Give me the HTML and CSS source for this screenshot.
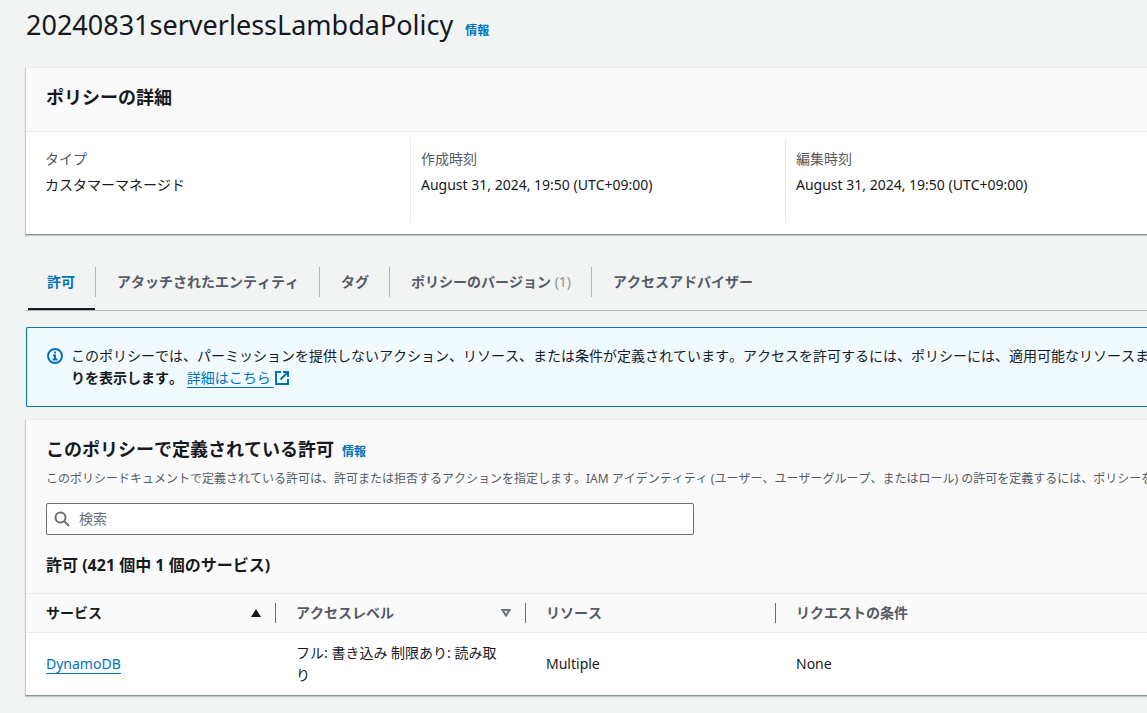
FILE: index.html
```html
<!DOCTYPE html>
<html lang="ja">
<head>
<meta charset="utf-8">
<meta name="viewport" content="width=device-width, initial-scale=1">
<title>20240831serverlessLambdaPolicy</title>
<link rel="stylesheet" href="styles.css">
</head>
<body>
<main class="page">
  <header class="page-header">
    <h1 class="page-title">20240831serverlessLambdaPolicy</h1>
    <a class="info-link" href="#">情報</a>
  </header>

  <section class="card">
    <div class="card-header"><h2 class="card-title">ポリシーの詳細</h2></div>
    <dl class="details">
      <div class="detail"><dt>タイプ</dt><dd>カスタマーマネージド</dd></div>
      <div class="detail"><dt>作成時刻</dt><dd>August 31, 2024, 19:50 (UTC+09:00)</dd></div>
      <div class="detail"><dt>編集時刻</dt><dd>August 31, 2024, 19:50 (UTC+09:00)</dd></div>
    </dl>
  </section>

  <div class="tabs" role="tablist">
    <button class="tab tab-active" type="button" role="tab" aria-selected="true">許可</button>
    <button class="tab" type="button" role="tab">アタッチされたエンティティ</button>
    <button class="tab" type="button" role="tab">タグ</button>
    <button class="tab" type="button" role="tab">ポリシーのバージョン <span class="tab-count">(1)</span></button>
    <button class="tab" type="button" role="tab">アクセスアドバイザー</button>
  </div>

  <div class="alert">
    <svg class="alert-icon" viewBox="0 0 16 16" aria-hidden="true">
      <circle cx="8" cy="8" r="7"/>
      <path d="M6 7.500h2V12M5.500 11.500h5M7 4.500h2"/>
    </svg>
    <p class="alert-text">このポリシーでは、パーミッションを提供しないアクション、リソース、または条件が定義されています。アクセスを許可するには、ポリシーには、適用可能なリソースま<br><b>りを表示します。</b> <a class="link" href="#">詳細はこちら&nbsp;</a><svg class="external-icon" viewBox="0 0 16 16" aria-hidden="true"><path d="M7 2H2v12h12V9M9 2h5v5M14 2L6.500 9.500"/></svg></p>
  </div>

  <section class="card permissions">
    <div class="permissions-header">
      <div class="heading-row">
        <h2 class="card-title">このポリシーで定義されている許可</h2>
        <a class="info-link" href="#">情報</a>
      </div>
      <p class="description">このポリシードキュメントで定義されている許可は、許可または拒否するアクションを指定します。IAM アイデンティティ (ユーザー、ユーザーグループ、またはロール) の許可を定義するには、ポリシーを</p>
      <label class="search">
        <svg class="search-icon" viewBox="0 0 16 16" aria-hidden="true"><circle cx="6.500" cy="6.500" r="5"/><path d="M10.500 10.500L15 15"/></svg>
        <input class="search-input" type="search" placeholder="検索" aria-label="検索">
      </label>
      <h3 class="subheading">許可 (421 個中 1 個のサービス)</h3>
    </div>
    <table class="table">
      <thead>
        <tr>
          <th class="sorted" scope="col"><div class="th-content">サービス<svg class="sort-icon" viewBox="0 0 10 8" aria-hidden="true"><path class="sort-fill" d="M5 0L10 8H0z"/></svg></div></th>
          <th scope="col"><div class="th-content">アクセスレベル<svg class="sort-icon" viewBox="0 0 10 8" aria-hidden="true"><path class="sort-outline" d="M1.500 1h7L5 6.500z"/></svg></div></th>
          <th scope="col"><div class="th-content">リソース</div></th>
          <th scope="col"><div class="th-content">リクエストの条件</div></th>
        </tr>
      </thead>
      <tbody>
        <tr>
          <td><a class="link" href="#">DynamoDB</a></td>
          <td>フル: 書き込み 制限あり: 読み取り</td>
          <td>Multiple</td>
          <td>None</td>
        </tr>
      </tbody>
    </table>
  </section>
</main>
</body>
</html>
```
FILE: styles.css
```css
* { box-sizing: border-box; }

body {
  margin: 0;
  background: #f2f3f3;
  color: #16191f;
  font: 14px/22px "Noto Sans", "Noto Sans CJK JP", sans-serif;
  font-kerning: none;
  overflow-x: hidden;
}

h1, h2, h3, p, dl, dd { margin: 0; }

.page { padding: 7px 0 16px 26px; }

.page-header, .heading-row {
  display: flex;
  align-items: baseline;
  gap: 8px;
}

.page-header { gap: 12px; }

.page-title { font-size: 27px; line-height: 36px; font-weight: 400; }

.info-link {
  color: #0073bb;
  font-size: 12px;
  line-height: 18px;
  font-weight: 700;
  text-decoration: none;
}

.card {
  margin-top: 24px;
  margin-left: -1px;
  background: #fff;
  border-top: 1px solid #eaeded;
  border-left: 1px solid #c6cbcc;
  border-bottom: 1px solid #879596;
  box-shadow: 0 1px 1px rgba(0, 28, 36, 0.2);
}

.card-header {
  padding: 17px 20px 22px;
  background: #fafafa;
  border-bottom: 1px solid #eaeded;
}

.card-title { font-size: 18px; line-height: 24px; font-weight: 700; }

.details {
  display: grid;
  grid-template-columns: 375px 375px 1fr;
  padding: 6px 0 11px 9px;
}

.detail { padding: 10px 10px 27px; white-space: nowrap; }
.detail + .detail { border-left: 1px solid #eaeded; }
.detail dt { margin-bottom: 4px; color: #545b64; }

.tabs {
  display: flex;
  align-items: flex-start;
  margin-top: 32px;
  border-bottom: 1px solid #aab7b8;
}

.tab {
  position: relative;
  height: 30px;
  margin-bottom: 13px;
  padding: 0 20px 0 21px;
  border: 0;
  border-right: 1px solid #aab7b8;
  background: none;
  color: #545b64;
  font: inherit;
  font-kerning: none;
  font-weight: 700;
  white-space: nowrap;
}

.tab:last-child { border-right: 0; }
.tab-active { color: #0073bb; }

.tab-active::after {
  content: "";
  position: absolute;
  left: 2px;
  right: 0;
  bottom: -13px;
  height: 2px;
  background: #16191f;
}

.tab-count { color: #879596; font-weight: 400; }

.alert {
  display: flex;
  gap: 8px;
  margin-top: 16px;
  padding: 17px 0 17px 20px;
  background: #f1faff;
  border: 1px solid #0073bb;
  border-right: 0;
  border-radius: 2px 0 0 2px;
  overflow: hidden;
}

.alert-icon {
  flex: none;
  width: 16px;
  height: 22px;
  fill: none;
  stroke: #0073bb;
  stroke-width: 2;
}

.alert-text { white-space: nowrap; }

.external-icon {
  width: 16px;
  height: 16px;
  vertical-align: -3px;
  fill: none;
  stroke: #0073bb;
  stroke-width: 2;
}

.link {
  color: #0073bb;
  text-decoration: none;
  border-bottom: 1px solid #0073bb;
}

.permissions { margin-top: 12px; }

.permissions-header {
  padding: 17px 0 17px 20px;
  background: #fafafa;
  border-bottom: 1px solid #eaeded;
}

.description {
  margin-top: 9px;
  color: #545b64;
  font-size: 12px;
  line-height: 18px;
  white-space: nowrap;
  overflow: hidden;
}

.search {
  display: flex;
  align-items: center;
  gap: 9px;
  width: 100%;
  max-width: 648px;
  height: 32px;
  margin-top: 15px;
  padding: 0 7px;
  background: #fff;
  border: 1px solid #687078;
  border-radius: 2px;
}

.search-icon {
  flex: none;
  width: 16px;
  height: 16px;
  fill: none;
  stroke: #687078;
  stroke-width: 2;
}

.search-input {
  flex: 1;
  min-width: 0;
  padding: 0;
  border: 0;
  outline: 0;
  background: none;
  color: inherit;
  font: inherit;
}

.search-input::placeholder { color: #687078; }

.subheading { margin-top: 19px; font-size: 16px; line-height: 22px; font-weight: 700; }

.table {
  width: 100%;
  table-layout: fixed;
  border-collapse: separate;
  border-spacing: 0;
}

th {
  width: 250px;
  padding: 9px 0;
  background: #fafafa;
  border-bottom: 1px solid #eaeded;
  color: #545b64;
  font-weight: 700;
  text-align: left;
}

th:last-child { width: auto; }
.sorted { color: #16191f; }

.th-content {
  display: flex;
  align-items: center;
  justify-content: space-between;
  height: 20px;
  padding: 0 14px 0 20px;
  border-right: 1px solid #687078;
}

th:last-child .th-content { border-right: 0; }

.sort-icon { width: 10px; height: 8px; }
.sort-fill { fill: #16191f; }
.sort-outline { fill: none; stroke: #687078; stroke-width: 2; }

td { padding: 9px 20px; vertical-align: middle; }
```
